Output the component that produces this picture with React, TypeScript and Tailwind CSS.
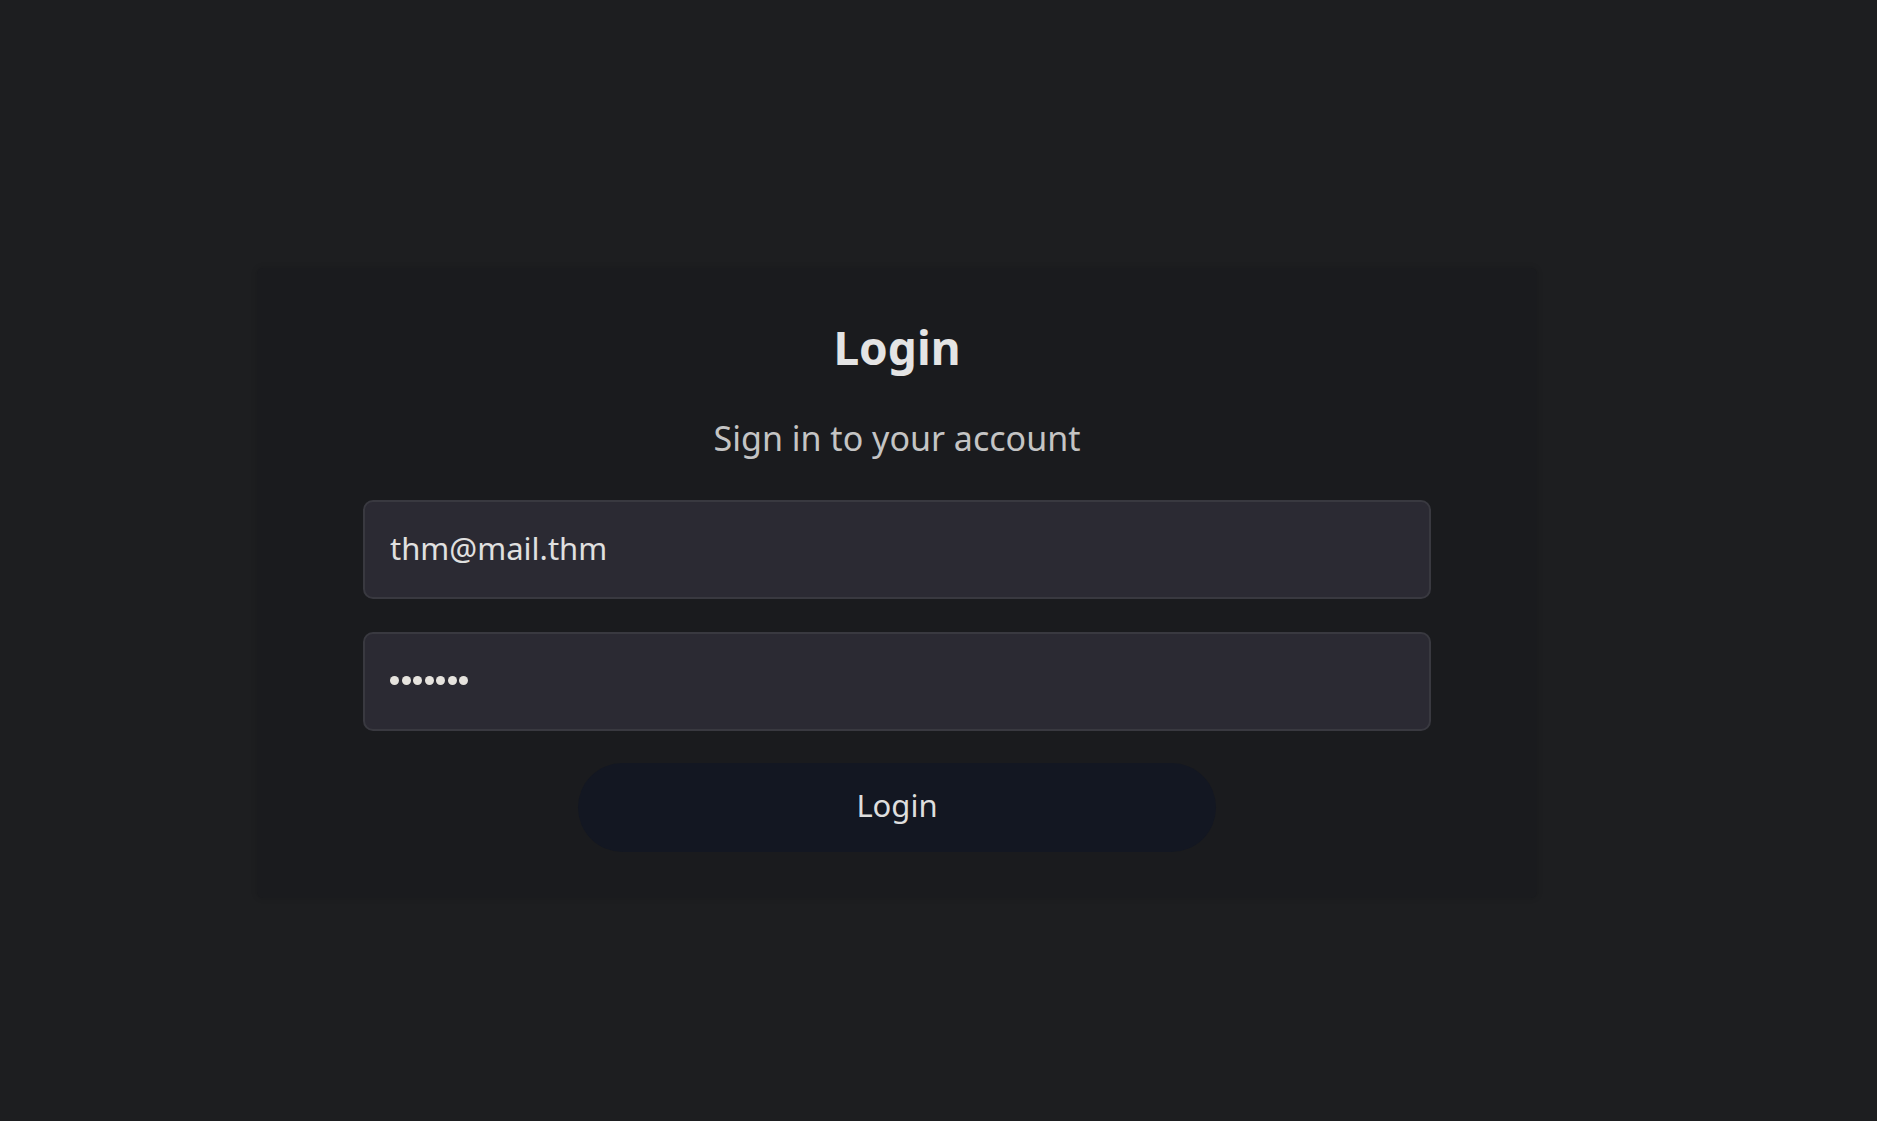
import React from "react";

export default function App() {
  return (
    <div
      className="min-h-[1121px] w-full bg-[#1d1e20] pt-[268px]"
      style={{ fontFamily: '"Noto Sans", "Open Sans", sans-serif' }}
    >
      <div className="ml-[257px] flex h-[630px] w-[1280px] flex-col items-center rounded-md bg-[#1a1b1e] pt-[51px] shadow-[0_0_6px_rgba(0,0,0,0.15)]">
        <h1 className="text-[46px] font-bold leading-[56px] text-[#e4e4e4]">Login</h1>
        <p className="mt-[43px] text-[34px] leading-[40px] text-[#c4c4c4]">Sign in to your account</p>
        <form className="mt-[42px] flex w-[1068px] flex-col items-center" onSubmit={(e) => e.preventDefault()}>
          <input
            type="email"
            readOnly
            defaultValue="thm@mail.thm"
            className="h-[99px] w-full rounded-[10px] border-2 border-[#393940] bg-[#2b2a33] pb-[4px] pl-[25px] text-[31px] text-[#e0e0e0] outline-none"
            style={{ fontFamily: '"Noto Sans", "Open Sans", sans-serif' }}
          />
          <div className="mt-[33px] flex h-[99px] w-full items-center rounded-[10px] border-2 border-[#393940] bg-[#2b2a33] pb-[2px] pl-[25px]">
            <div className="flex gap-[2.5px]">
              {Array.from({ length: 7 }).map((_, i) => (
                <span key={i} className="block h-[9px] w-[9px] rounded-full bg-[#e6e3de]" />
              ))}
            </div>
          </div>
          <button
            type="submit"
            className="mt-[32px] h-[89px] w-[638px] rounded-full bg-[#131722] pb-[4px] text-[31px] text-[#dedede]"
            style={{ fontFamily: '"Noto Sans", "Open Sans", sans-serif' }}
          >
            Login
          </button>
        </form>
      </div>
    </div>
  );
}
